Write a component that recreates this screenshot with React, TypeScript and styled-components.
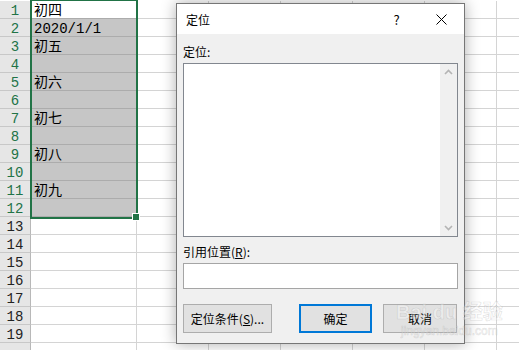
import React from 'react';
import styled, { createGlobalStyle } from 'styled-components';

const GlobalStyle = createGlobalStyle`
  html, body {
    margin: 0;
    padding: 0;
    background: #ffffff;
    overflow: hidden;
  }
  * {
    box-sizing: border-box;
  }
`;

const cellFont = `"Liberation Mono", "Noto Sans CJK SC", monospace`;
const uiFont = `"Noto Sans CJK SC", "Noto Sans", sans-serif`;

const Screen = styled.div`
  position: relative;
  width: 519px;
  height: 350px;
  overflow: hidden;
`;

const Sheet = styled.div`
  display: flex;
  flex-direction: column;
  padding-top: 1px;
`;

const Row = styled.div`
  display: flex;
  height: 18px;
`;

const RowHeader = styled.div<{ $active?: boolean }>`
  width: 31px;
  flex: none;
  background: #e6e6e6;
  border-right: 1px solid #b8b8b8;
  border-bottom: 1px solid #c8c8c8;
  color: ${p => (p.$active ? '#217346' : '#222222')};
  font-family: ${cellFont};
  font-size: 14px;
  padding-top: 4px;
  line-height: 13px;
  text-align: center;
`;

const Cell = styled.div<{ $w: number; $sel?: boolean; $active?: boolean }>`
  width: ${p => p.$w}px;
  flex: none;
  background: ${p => (p.$sel && !p.$active ? '#c6c6c6' : '#ffffff')};
  border-right: 1px solid #d4d4d4;
  border-bottom: 1px solid ${p => (p.$sel ? '#acacac' : '#d4d4d4')};
  padding-left: 3px;
  padding-top: 4px;
  font-family: ${cellFont};
  font-size: 14px;
  line-height: 13px;
  color: #000000;
  white-space: nowrap;
`;

const Selection = styled.div`
  position: absolute;
  left: 30px;
  top: -1px;
  width: 108px;
  height: 220px;
  border: 2px solid #217346;
  pointer-events: none;
`;

const FillHandle = styled.div`
  position: absolute;
  left: 132px;
  top: 213px;
  width: 8px;
  height: 8px;
  background: #217346;
  border: 1px solid #ffffff;
`;

const Dialog = styled.div`
  position: absolute;
  left: 176px;
  top: 3px;
  width: 289px;
  height: 341px;
  background: #f0f0f0;
  border: 1px solid #767676;
  box-shadow: 0 0 14px rgba(0, 0, 0, 0.32);
  display: flex;
  flex-direction: column;
  font-family: ${uiFont};
  font-size: 12px;
  color: #000000;
`;

const TitleBar = styled.div`
  height: 30px;
  background: #ffffff;
  display: flex;
  align-items: center;
  padding-left: 9px;
`;

const Title = styled.div`
  flex: 1;
  font-size: 12px;
`;

const TitleButton = styled.div`
  width: 45px;
  height: 30px;
  display: flex;
  align-items: center;
  justify-content: center;
  font-size: 13px;
`;

const Body = styled.div`
  display: flex;
  flex-direction: column;
  padding: 0 6px 0 6px;
`;

const Label = styled.div<{ $top: number }>`
  margin-top: ${p => p.$top}px;
  height: 16px;
  line-height: 16px;
  font-size: 12px;
`;

const Key = styled.span`
  text-decoration: underline;
`;

const ListBox = styled.div`
  margin-top: 3px;
  height: 174px;
  width: 275px;
  background: #ffffff;
  border: 1px solid #82878f;
  display: flex;
  justify-content: flex-end;
`;

const ScrollBar = styled.div`
  width: 17px;
  height: 100%;
  background: #f0f0f0;
  display: flex;
  flex-direction: column;
  justify-content: space-between;
  align-items: center;
  padding: 5px 0;
`;

const Input = styled.div`
  margin-top: 3px;
  height: 26px;
  width: 275px;
  background: #ffffff;
  border: 1px solid #a5a5a5;
`;

const ButtonRow = styled.div`
  margin-top: 15px;
  display: flex;
  width: 275px;
`;

const ButtonGroup = styled.div`
  margin-left: auto;
  display: flex;
  gap: 11px;
  padding-right: 1px;
`;

const Button = styled.div<{ $w: number; $default?: boolean }>`
  width: ${p => p.$w}px;
  height: 29px;
  background: #e1e1e1;
  border: ${p => (p.$default ? '2px solid #0078d7' : '1px solid #adadad')};
  display: flex;
  align-items: center;
  justify-content: center;
  font-size: 12px;
`;

const Watermark = styled.div`
  position: absolute;
  left: 396px;
  top: 300px;
  display: flex;
  flex-direction: column;
  align-items: center;
  white-space: nowrap;
  font-family: "Liberation Sans", "Noto Sans CJK SC", sans-serif;
  color: rgba(255, 255, 255, 0.35);
  -webkit-text-stroke: 0.6px rgba(150, 150, 150, 0.3);
  pointer-events: none;
`;

const MarkTop = styled.div`
  font-size: 20px;
  font-weight: bold;
  line-height: 24px;
`;

const MarkBottom = styled.div`
  font-size: 12px;
  line-height: 14px;
`;

const Chevron = ({ up }: { up?: boolean }) => (
  <svg width="9" height="6" viewBox="0 0 9 6">
    <path
      d={up ? 'M1 5 L4.5 1.5 L8 5' : 'M1 1 L4.5 4.5 L8 1'}
      fill="none"
      stroke="#b4b4b4"
      strokeWidth="1.6"
    />
  </svg>
);

const CloseIcon = () => (
  <svg width="11" height="11" viewBox="0 0 11 11">
    <path d="M0.5 0.5 L10.5 10.5 M10.5 0.5 L0.5 10.5" stroke="#000" strokeWidth="1" />
  </svg>
);

const values: Record<number, string> = {
  1: '初四',
  2: '2020/1/1',
  3: '初五',
  5: '初六',
  7: '初七',
  9: '初八',
  11: '初九',
};

const otherCols = [72, 72, 72, 72, 72, 72];

const App: React.FC = () => {
  const rows = Array.from({ length: 19 }, (_, i) => i + 1);
  return (
    <>
      <GlobalStyle />
      <Screen>
        <Sheet>
          {rows.map(r => {
            const sel = r <= 12;
            return (
              <Row key={r}>
                <RowHeader $active={sel}>{r}</RowHeader>
                <Cell $w={106} $sel={sel} $active={r === 1}>
                  {values[r] ?? ''}
                </Cell>
                {otherCols.map((w, i) => (
                  <Cell key={i} $w={w} />
                ))}
              </Row>
            );
          })}
          <Row>
            <RowHeader />
            <Cell $w={106} />
            {otherCols.map((w, i) => (
              <Cell key={i} $w={w} />
            ))}
          </Row>
        </Sheet>
        <Selection />
        <FillHandle />

        <Dialog>
          <TitleBar>
            <Title>定位</Title>
            <TitleButton>?</TitleButton>
            <TitleButton>
              <CloseIcon />
            </TitleButton>
          </TitleBar>
          <Body>
            <Label $top={10}>定位:</Label>
            <ListBox>
              <ScrollBar>
                <Chevron up />
                <Chevron />
              </ScrollBar>
            </ListBox>
            <Label $top={7}>
              引用位置(<Key>R</Key>):
            </Label>
            <Input />
            <ButtonRow>
              <Button $w={89}>
                定位条件(<Key>S</Key>)...
              </Button>
              <ButtonGroup>
                <Button $w={73} $default>
                  确定
                </Button>
                <Button $w={74}>取消</Button>
              </ButtonGroup>
            </ButtonRow>
          </Body>
        </Dialog>

        <Watermark>
          <MarkTop>Bai du 经验</MarkTop>
          <MarkBottom>jingyan.baidu.com</MarkBottom>
        </Watermark>
      </Screen>
    </>
  );
};

export default App;
